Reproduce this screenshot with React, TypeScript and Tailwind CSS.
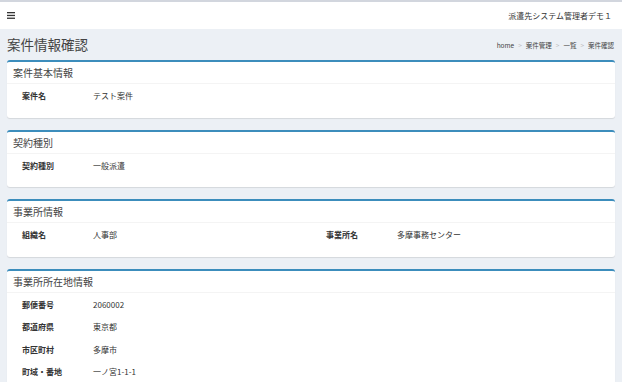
const font = { fontFamily: '"Noto Sans CJK JP", "Noto Sans", sans-serif' };

type Field = { label: string; value: string };

function Card({ title, rows }: { title: string; rows: Field[][] }) {
  return (
    <div className="mb-[12px] rounded-[3px] border-t-2 border-[#3c8dbc] bg-white shadow-[0_1px_1px_rgba(0,0,0,0.1)]">
      <div className="flex h-[22px] items-center border-b border-[#f4f4f4] px-[6px] text-[10px] text-[#444]">
        {title}
      </div>
      <div className="pt-[1px] pb-[10px]">
        {rows.map((row, i) => (
          <div key={i} className="grid h-[22.5px] grid-cols-2 items-center">
            {row.map((f) => (
              <div key={f.label} className="flex items-center pl-[15px]">
                <span className="w-[71px] text-[8px] font-bold text-[#333]">{f.label}</span>
                <span className="text-[8px] text-[#333]">{f.value}</span>
              </div>
            ))}
          </div>
        ))}
      </div>
    </div>
  );
}

export default function App() {
  return (
    <div className="h-[382px] w-[622px] overflow-hidden bg-[#ecf0f5]" style={font}>
      {/* Top Bar */}
      <div className="flex h-[29px] items-center justify-between border-t-2 border-[#d2d6de] bg-white pl-[7px] pr-[10px]">
        <svg width="8" height="7" viewBox="0 0 8 7">
          <rect x="0" y="0" width="8" height="1.3" fill="#333" />
          <rect x="0" y="2.8" width="8" height="1.3" fill="#333" />
          <rect x="0" y="5.6" width="8" height="1.3" fill="#333" />
        </svg>
        <span className="text-[8px] text-[#333]">派遣先システム管理者デモ１</span>
      </div>

      {/* Content */}
      <div className="px-[7px]">
        <div className="flex h-[31px] items-center justify-between">
          <h1 className="text-[13.5px] text-[#444]">案件情報確認</h1>
          <div className="flex items-center gap-[4px] pr-[1px] pt-[3px] text-[6.5px] text-[#444]">
            <span>home</span>
            <span className="text-[#bbb]">&gt;</span>
            <span>案件管理</span>
            <span className="text-[#bbb]">&gt;</span>
            <span>一覧</span>
            <span className="text-[#bbb]">&gt;</span>
            <span>案件確認</span>
          </div>
        </div>

        <Card title="案件基本情報" rows={[[{ label: '案件名', value: 'テスト案件' }]]} />
        <Card title="契約種別" rows={[[{ label: '契約種別', value: '一般派遣' }]]} />
        <Card
          title="事業所情報"
          rows={[
            [
              { label: '組織名', value: '人事部' },
              { label: '事業所名', value: '多摩事務センター' },
            ],
          ]}
        />
        <Card
          title="事業所所在地情報"
          rows={[
            [{ label: '郵便番号', value: '2060002' }],
            [{ label: '都道府県', value: '東京都' }],
            [{ label: '市区町村', value: '多摩市' }],
            [{ label: '町域・番地', value: '一ノ宮1-1-1' }],
          ]}
        />
      </div>
    </div>
  );
}
